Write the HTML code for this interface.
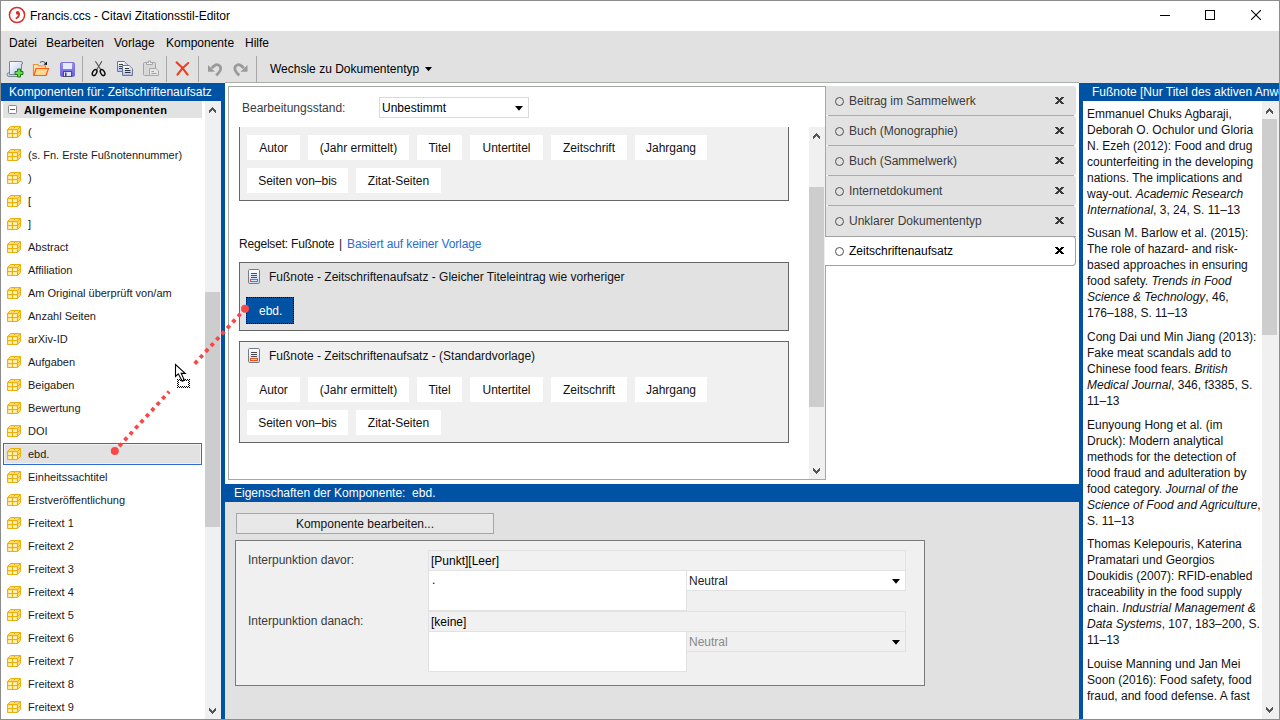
<!DOCTYPE html>
<html><head><meta charset="utf-8">
<style>
*{box-sizing:border-box;margin:0;padding:0}
html,body{width:1280px;height:720px;overflow:hidden;background:#fff}
body{position:relative;font-family:"Liberation Sans",sans-serif;font-size:12px;color:#000}
.a{position:absolute}
.t{position:absolute;white-space:nowrap;line-height:16px}
.s11{font-size:11px}
.b{font-weight:bold}
.bl{background:#0053a4}
.gr{background:#e1e1e1}
.sep{position:absolute;top:56px;width:1px;height:26px;background:#a8a8a8}
.chip{position:absolute;height:25px;background:#fff;line-height:16px;padding-top:5px;text-align:center;color:#111}
.box{position:absolute;border:1px solid #666}
.tab{position:absolute;left:826px;width:250px;height:29px;background:#e2e2e2;border-radius:0 2.5px 2.5px 0}
.tab .r{position:absolute;left:9px;top:11px;width:9px;height:9px;border:1px solid #505050;border-radius:50%}
.tab .t{left:23px;top:7px;color:#3a3a3a}
.tab svg{position:absolute;left:229px;top:11px}
.tsep{position:absolute;left:828px;width:246px;height:1px;background:#b2ab98}
</style></head><body>
<svg width="0" height="0" style="position:absolute">
<defs>
<g id="cube">
  <path d="M0.5 3.5 L3.5 0.5 H13.5 V8.5 L10.5 11.5 H0.5 Z" fill="#fcd972" stroke="#ebb10a" stroke-width="1"/>
  <path d="M0.5 3.5 H10.5 V11.5 M10.5 3.5 L13.5 0.5" fill="none" stroke="#ebb10a" stroke-width="1"/>
  <path d="M5.5 3.5 V11.5 M0.5 7.5 H10.5" stroke="#ebb10a" stroke-width="1"/>
  <path d="M7 2 L8.5 0.5 M10.5 7.5 L13.5 4.5" stroke="#ebb10a" stroke-width="1"/>
  <rect x="1.5" y="4.5" width="3" height="2.5" fill="#fff3c8"/>
  <rect x="6.3" y="4.5" width="3.5" height="2.5" fill="#fff3c8"/>
  <rect x="1.5" y="8.3" width="3" height="2.5" fill="#fff3c8"/>
  <rect x="6.3" y="8.3" width="3.5" height="2.5" fill="#fff3c8"/>
</g>
<g id="doc">
  <defs><linearGradient id="dg" x1="0" y1="0" x2="0" y2="1"><stop offset="0" stop-color="#ffffff"/><stop offset="1" stop-color="#c8d8f4"/></linearGradient></defs>
  <rect x="0.5" y="0.5" width="11" height="14" rx="1.2" fill="url(#dg)" stroke="#737c88"/>
  <path d="M3 4.5H9M3 6.5H9M3 8.5H9" stroke="#4a4a4a" stroke-width="1"/>
  <rect x="2.5" y="10.5" width="7" height="2" fill="#d4e8fb" stroke="#f0521e" stroke-width="1"/>
</g>
<g id="xx"><path d="M0 0h3v1h-3zM6 0h3v1h-3zM1 1h3v1h-3zM5 1h3v1h-3zM2 2h5v1h-5zM3 3h3v1h-3zM2 4h5v1h-5zM1 5h3v1h-3zM5 5h3v1h-3zM0 6h3v1h-3zM6 6h3v1h-3z"/></g>
<path id="cu" d="M3 0h1v1h-1zM2 1h3v1h-3zM1 2h5v1h-5zM0 3h3v1h-3zM4 3h3v1h-3zM0 4h2v1h-2zM5 4h2v1h-2zM0 5h1v1h-1zM6 5h1v1h-1z"/>
<path id="cd" d="M3 5h1v1h-1zM2 4h3v1h-3zM1 3h5v1h-5zM0 2h3v1h-3zM4 2h3v1h-3zM0 1h2v1h-2zM5 1h2v1h-2zM0 0h1v1h-1zM6 0h1v1h-1z"/>
<path id="t8" d="M0 0H8L4 4.8Z"/>
<path id="t7" d="M0 0H7L3.5 4.2Z"/>
</defs></svg>

<div class="a" style="left:0;top:0;width:1280px;height:31px;background:#fff"></div>
<svg class="a" style="left:8px;top:6px" width="18" height="18" viewBox="0 0 18 18">
  <circle cx="9" cy="9" r="7.6" fill="none" stroke="#d8302a" stroke-width="1.5"/>
  <circle cx="9.7" cy="6.8" r="1.9" fill="#d8302a"/>
  <path d="M11.2 7 C11.3 9.6 9.9 11.6 7.7 12.6" fill="none" stroke="#d8302a" stroke-width="1.8"/>
</svg>
<div class="t" style="left:30px;top:8px">Francis.ccs - Citavi Zitationsstil-Editor</div>
<div class="a" style="left:1160px;top:15px;width:10px;height:1px;background:#000"></div>
<div class="a" style="left:1205px;top:10px;width:10px;height:10px;border:1px solid #000"></div>
<svg class="a" style="left:1251px;top:10px" width="10" height="10" viewBox="0 0 10 10"><path d="M0 0L10 10M10 0L0 10" stroke="#000" stroke-width="1.1"/></svg>

<div class="a gr" style="left:0;top:31px;width:1280px;height:52px"></div>
<div class="t" style="left:9px;top:35px">Datei</div>
<div class="t" style="left:46px;top:35px">Bearbeiten</div>
<div class="t" style="left:114px;top:35px">Vorlage</div>
<div class="t" style="left:166px;top:35px">Komponente</div>
<div class="t" style="left:245px;top:35px">Hilfe</div>
<div class="sep" style="left:82px"></div>
<div class="sep" style="left:166px"></div>
<div class="sep" style="left:198px"></div>
<div class="sep" style="left:256px"></div>
<svg class="a" style="left:6px;top:60px" width="18" height="18" viewBox="0 0 18 18">
  <defs><linearGradient id="pg" x1="0" y1="0" x2="1" y2="1"><stop offset="0" stop-color="#ffffff"/><stop offset="1" stop-color="#b8c8ee"/></linearGradient></defs>
  <path d="M3.5 1.5 H15 Q16.5 1.5 16.5 3 V4 H15.5 V14.5 H3.5 Z" fill="url(#pg)" stroke="#7d8696" stroke-width="1"/>
  <path d="M1 14.5 Q1 12.5 3.5 12.5 V14.5 H13 Q14 16.5 12 16.5 H3 Q1 16.5 1 14.5Z" fill="#c9d6f2" stroke="#7d8696" stroke-width="1"/>
  <circle cx="13" cy="13" r="4.3" fill="#fff" opacity="0"/>
  <path d="M11.5 9 H14.5 V11.5 H17 V14.5 H14.5 V17 H11.5 V14.5 H9 V11.5 H11.5 Z" fill="#6ad84a" stroke="#148014" stroke-width="1"/>
</svg>
<svg class="a" style="left:32px;top:60px" width="18" height="17" viewBox="0 0 18 17">
  <defs><linearGradient id="fg" x1="0" y1="0" x2="0" y2="1"><stop offset="0" stop-color="#fff4d0"/><stop offset="1" stop-color="#ffc070"/></linearGradient></defs>
  <path d="M1.5 4.5 H5.5 L7 6 H13.5 V15.5 H1.5 Z" fill="url(#fg)" stroke="#f88a30" stroke-width="1.2"/>
  <path d="M2 15.5 L4 8.5 H16.5 L14 15.5 Z" fill="#ffd890" stroke="#ff5a18" stroke-width="1.2"/>
  <path d="M8 2.5 Q10.5 0.5 13 2.6" fill="none" stroke="#5a6a80" stroke-width="1.1"/>
  <path d="M11.5 4.5 L15 1.6 L15 5 Z" fill="#111"/>
</svg>
<svg class="a" style="left:60px;top:62px" width="15" height="15" viewBox="0 0 15 15">
  <defs><linearGradient id="sg" x1="0" y1="0" x2="0" y2="1"><stop offset="0" stop-color="#9c98f4"/><stop offset="1" stop-color="#6c58d0"/></linearGradient></defs>
  <rect x="0.5" y="0.5" width="14" height="14" rx="1.5" fill="url(#sg)" stroke="#7c70e0"/>
  <rect x="3" y="1" width="9" height="6" fill="#e4ecfc"/>
  <rect x="3.5" y="9.5" width="8" height="5" fill="#d8e4f8" stroke="#505060"/>
  <rect x="5" y="10.5" width="1.5" height="3.5" fill="#503880"/>
</svg>
<svg class="a" style="left:91px;top:60px" width="16" height="17" viewBox="0 0 16 17">
  <path d="M4.4 1.2 L10.2 10.2 M10.9 1.2 L5.3 10.2" stroke="#505050" stroke-width="1.1" fill="none"/>
  <ellipse cx="3.6" cy="12.6" rx="1.9" ry="3.2" transform="rotate(28 3.6 12.6)" fill="none" stroke="#111" stroke-width="1.5"/>
  <ellipse cx="11.6" cy="12.6" rx="1.9" ry="3.2" transform="rotate(-28 11.6 12.6)" fill="none" stroke="#111" stroke-width="1.5"/>
</svg>
<svg class="a" style="left:116px;top:60px" width="18" height="17" viewBox="0 0 18 17">
  <defs><linearGradient id="cg" x1="0" y1="0" x2="0" y2="1"><stop offset="0" stop-color="#ffffff"/><stop offset="1" stop-color="#aebcf4"/></linearGradient></defs>
  <path d="M1.5 1.5 H8.5 L11.5 4.5 V11.5 H1.5 Z" fill="url(#cg)" stroke="#687890" stroke-width="1"/>
  <path d="M8.5 1.5 L11.5 4.5 H8.5Z" fill="#b8d0f0"/>
  <path d="M3 4.5H7M3 6.5H8M3 8.5H8" stroke="#444" stroke-width="1"/>
  <path d="M6.5 5.5 H13.5 L16.5 8.5 V15.5 H6.5 Z" fill="url(#cg)" stroke="#687890" stroke-width="1"/>
  <path d="M13.5 5.5 L16.5 8.5 H13.5Z" fill="#b8d0f0"/>
  <path d="M9 8.5H13M9 10.5H14.5M9 12.5H14.5" stroke="#333" stroke-width="1"/>
</svg>
<svg class="a" style="left:142px;top:60px" width="18" height="17" viewBox="0 0 18 17">
  <rect x="1.5" y="2.5" width="12" height="13" rx="1" fill="#d8d8d8" stroke="#a4a4a4"/>
  <path d="M4.5 4.5 H10.5 V2.5 H8.5 V1 H6.5 V2.5 H4.5Z" fill="#ececec" stroke="#a4a4a4"/>
  <path d="M7.5 8.5 H14 L16.5 11 V15.5 H7.5 Z" fill="#e6e6e6" stroke="#a8a8a8"/>
  <path d="M9.5 11.5H12M9.5 13.5H14.5" stroke="#a0a0a0"/>
</svg>
<svg class="a" style="left:175px;top:61px" width="15" height="15" viewBox="0 0 15 15">
  <path d="M1.6 1.4 Q7.5 6 12.6 13.6" stroke="#f03c1c" stroke-width="2" stroke-linecap="round" fill="none"/>
  <path d="M13.2 2 Q7 7 2.4 13.6" stroke="#f03c1c" stroke-width="2" stroke-linecap="round" fill="none"/>
</svg>
<svg class="a" style="left:207px;top:62px" width="16" height="15" viewBox="0 0 16 15">
  <path d="M4.8 6.2 Q9 0.6 12.8 4 Q15.6 7.5 9.2 13.4" fill="none" stroke="#9a9a9a" stroke-width="2.8"/>
  <path d="M1 3 L8 9.8 L1 9.8 Z" fill="#9a9a9a"/>
</svg>
<svg class="a" style="left:233px;top:62px" width="16" height="15" viewBox="0 0 16 15">
  <g transform="translate(15.5 0) scale(-1 1)">
  <path d="M4.8 6.2 Q9 0.6 12.8 4 Q15.6 7.5 9.2 13.4" fill="none" stroke="#9a9a9a" stroke-width="2.8"/>
  <path d="M1 3 L8 9.8 L1 9.8 Z" fill="#9a9a9a"/>
  </g>
</svg>
<div class="t" style="left:270px;top:61px">Wechsle zu Dokumententyp</div>
<svg class="a" style="left:425px;top:67px" width="7" height="5"><use href="#t7"/></svg>
<div class="a bl" style="left:1px;top:83px;width:224px;height:18px"></div>
<div class="t" style="left:9px;top:84px;color:#fff">Komponenten für: Zeitschriftenaufsatz</div>
<div class="a bl" style="left:221px;top:83px;width:4px;height:637px"></div>
<div class="a" style="left:1px;top:101px;width:220px;height:618px;background:#fff"></div>
<div class="a" style="left:3px;top:101px;width:199px;height:17px;background:#e2e2e2"></div>
<div class="a" style="left:8px;top:105px;width:9px;height:9px;border:1px solid #8a8a8a;background:#fff;border-radius:1.5px"></div>
<div class="a" style="left:10px;top:109px;width:5px;height:1px;background:#3b5aa0"></div>
<div class="t s11 b" style="left:24px;top:102px;letter-spacing:0.35px">Allgemeine Komponenten</div>
<div class="a" style="left:205px;top:101px;width:16px;height:618px;background:#f0f0f0"></div>
<div class="a" style="left:205px;top:292px;width:15px;height:235px;background:#cdcdcd"></div>
<svg class="a" style="left:209px;top:107px;fill:#555" width="7" height="6"><use href="#cu"/></svg>
<svg class="a" style="left:209px;top:708px;fill:#555" width="7" height="6"><use href="#cd"/></svg>

<svg class="a" style="left:7px;top:126px" width="14" height="12"><use href="#cube"/></svg>
<div class="t s11" style="left:28px;top:124px;color:#1a1a1a">(</div>
<svg class="a" style="left:7px;top:149px" width="14" height="12"><use href="#cube"/></svg>
<div class="t s11" style="left:28px;top:147px;color:#1a1a1a">(s. Fn. Erste Fußnotennummer)</div>
<svg class="a" style="left:7px;top:172px" width="14" height="12"><use href="#cube"/></svg>
<div class="t s11" style="left:28px;top:170px;color:#1a1a1a">)</div>
<svg class="a" style="left:7px;top:195px" width="14" height="12"><use href="#cube"/></svg>
<div class="t s11" style="left:28px;top:193px;color:#1a1a1a">[</div>
<svg class="a" style="left:7px;top:218px" width="14" height="12"><use href="#cube"/></svg>
<div class="t s11" style="left:28px;top:216px;color:#1a1a1a">]</div>
<svg class="a" style="left:7px;top:241px" width="14" height="12"><use href="#cube"/></svg>
<div class="t s11" style="left:28px;top:239px;color:#1a1a1a">Abstract</div>
<svg class="a" style="left:7px;top:264px" width="14" height="12"><use href="#cube"/></svg>
<div class="t s11" style="left:28px;top:262px;color:#1a1a1a">Affiliation</div>
<svg class="a" style="left:7px;top:287px" width="14" height="12"><use href="#cube"/></svg>
<div class="t s11" style="left:28px;top:285px;color:#1a1a1a">Am Original überprüft von/am</div>
<svg class="a" style="left:7px;top:310px" width="14" height="12"><use href="#cube"/></svg>
<div class="t s11" style="left:28px;top:308px;color:#1a1a1a">Anzahl Seiten</div>
<svg class="a" style="left:7px;top:333px" width="14" height="12"><use href="#cube"/></svg>
<div class="t s11" style="left:28px;top:331px;color:#1a1a1a">arXiv-ID</div>
<svg class="a" style="left:7px;top:356px" width="14" height="12"><use href="#cube"/></svg>
<div class="t s11" style="left:28px;top:354px;color:#1a1a1a">Aufgaben</div>
<svg class="a" style="left:7px;top:379px" width="14" height="12"><use href="#cube"/></svg>
<div class="t s11" style="left:28px;top:377px;color:#1a1a1a">Beigaben</div>
<svg class="a" style="left:7px;top:402px" width="14" height="12"><use href="#cube"/></svg>
<div class="t s11" style="left:28px;top:400px;color:#1a1a1a">Bewertung</div>
<svg class="a" style="left:7px;top:425px" width="14" height="12"><use href="#cube"/></svg>
<div class="t s11" style="left:28px;top:423px;color:#1a1a1a">DOI</div>
<div class="a" style="left:3px;top:443px;width:199px;height:22px;border:1px solid #2f6bd0;background:#e2e2e2;box-shadow:inset 0 0 0 1px #f2f2f2"></div>
<svg class="a" style="left:7px;top:448px" width="14" height="12"><use href="#cube"/></svg>
<div class="t s11" style="left:28px;top:446px;color:#1a1a1a">ebd.</div>
<svg class="a" style="left:7px;top:471px" width="14" height="12"><use href="#cube"/></svg>
<div class="t s11" style="left:28px;top:469px;color:#1a1a1a">Einheitssachtitel</div>
<svg class="a" style="left:7px;top:494px" width="14" height="12"><use href="#cube"/></svg>
<div class="t s11" style="left:28px;top:492px;color:#1a1a1a">Erstveröffentlichung</div>
<svg class="a" style="left:7px;top:517px" width="14" height="12"><use href="#cube"/></svg>
<div class="t s11" style="left:28px;top:515px;color:#1a1a1a">Freitext 1</div>
<svg class="a" style="left:7px;top:540px" width="14" height="12"><use href="#cube"/></svg>
<div class="t s11" style="left:28px;top:538px;color:#1a1a1a">Freitext 2</div>
<svg class="a" style="left:7px;top:563px" width="14" height="12"><use href="#cube"/></svg>
<div class="t s11" style="left:28px;top:561px;color:#1a1a1a">Freitext 3</div>
<svg class="a" style="left:7px;top:586px" width="14" height="12"><use href="#cube"/></svg>
<div class="t s11" style="left:28px;top:584px;color:#1a1a1a">Freitext 4</div>
<svg class="a" style="left:7px;top:609px" width="14" height="12"><use href="#cube"/></svg>
<div class="t s11" style="left:28px;top:607px;color:#1a1a1a">Freitext 5</div>
<svg class="a" style="left:7px;top:632px" width="14" height="12"><use href="#cube"/></svg>
<div class="t s11" style="left:28px;top:630px;color:#1a1a1a">Freitext 6</div>
<svg class="a" style="left:7px;top:655px" width="14" height="12"><use href="#cube"/></svg>
<div class="t s11" style="left:28px;top:653px;color:#1a1a1a">Freitext 7</div>
<svg class="a" style="left:7px;top:678px" width="14" height="12"><use href="#cube"/></svg>
<div class="t s11" style="left:28px;top:676px;color:#1a1a1a">Freitext 8</div>
<svg class="a" style="left:7px;top:701px" width="14" height="12"><use href="#cube"/></svg>
<div class="t s11" style="left:28px;top:699px;color:#1a1a1a">Freitext 9</div>
<div class="a" style="left:225px;top:83px;width:854px;height:401px;background:#fff"></div>
<div class="a" style="left:225px;top:82px;width:854px;height:1px;background:#a9afa9"></div>
<div class="a" style="left:228px;top:86px;width:598px;height:394px;border:1px solid #a3aaa3"></div>
<div class="t" style="left:242px;top:100px;color:#3a3a3a">Bearbeitungsstand:</div>
<div class="a" style="left:379px;top:97px;width:150px;height:21px;border:1px solid #dadada;background:#fff"></div>
<div class="t" style="left:382px;top:100px">Unbestimmt</div>
<svg class="a" style="left:515px;top:106px" width="8" height="5"><use href="#t8"/></svg>
<div class="a" style="left:229px;top:127px;width:580px;height:352px;overflow:hidden">

<div class="a" style="left:10px;top:-27px;width:550px;height:101px;border:1px solid #666;background:#f0f0f0"></div>
<div class="chip" style="left:18px;top:8px;width:53px">Autor</div>
<div class="chip" style="left:79px;top:8px;width:101px">(Jahr ermittelt)</div>
<div class="chip" style="left:188px;top:8px;width:45px">Titel</div>
<div class="chip" style="left:241px;top:8px;width:73px">Untertitel</div>
<div class="chip" style="left:322px;top:8px;width:76px">Zeitschrift</div>
<div class="chip" style="left:406px;top:8px;width:72px">Jahrgang</div>
<div class="chip" style="left:18px;top:41px;width:101px">Seiten von–bis</div>
<div class="chip" style="left:127px;top:41px;width:85px">Zitat-Seiten</div>
<div class="t" style="left:10px;top:109px;color:#111;letter-spacing:-0.2px">Regelset: Fußnote</div>
<div class="t" style="left:110px;top:109px;color:#111">|</div>
<div class="t" style="left:118px;top:109px;color:#2a6ccc;letter-spacing:-0.12px">Basiert auf keiner Vorlage</div>
<div class="a" style="left:10px;top:135px;width:550px;height:69px;border:1px solid #666;background:#e2e2e2"></div>
<svg class="a" style="left:19px;top:142px" width="12" height="15"><use href="#doc"/></svg>
<div class="t" style="left:40px;top:142px;color:#111">Fußnote - Zeitschriftenaufsatz - Gleicher Titeleintrag wie vorheriger</div>
<div class="a" style="left:17px;top:170px;width:48px;height:27px;background:#0053a4;border:1px dotted #000"></div>
<div class="t" style="left:30px;top:176px;color:#fff">ebd.</div>
<div class="a" style="left:10px;top:214px;width:550px;height:102px;border:1px solid #666;background:#f0f0f0"></div>
<svg class="a" style="left:19px;top:221px" width="12" height="15"><use href="#doc"/></svg>
<div class="t" style="left:40px;top:221px;color:#111">Fußnote - Zeitschriftenaufsatz - (Standardvorlage)</div>
<div class="chip" style="left:18px;top:250px;width:53px">Autor</div>
<div class="chip" style="left:79px;top:250px;width:101px">(Jahr ermittelt)</div>
<div class="chip" style="left:188px;top:250px;width:45px">Titel</div>
<div class="chip" style="left:241px;top:250px;width:73px">Untertitel</div>
<div class="chip" style="left:322px;top:250px;width:76px">Zeitschrift</div>
<div class="chip" style="left:406px;top:250px;width:72px">Jahrgang</div>
<div class="chip" style="left:18px;top:283px;width:101px">Seiten von–bis</div>
<div class="chip" style="left:127px;top:283px;width:85px">Zitat-Seiten</div>
</div>
<div class="a" style="left:809px;top:127px;width:16px;height:352px;background:#f0f0f0"></div>
<div class="a" style="left:809px;top:187px;width:15px;height:220px;background:#cdcdcd"></div>
<svg class="a" style="left:813px;top:133px;fill:#555" width="7" height="6"><use href="#cu"/></svg>
<svg class="a" style="left:813px;top:468px;fill:#555" width="7" height="6"><use href="#cd"/></svg>

<div class="tab" style="top:86px;height:29px"><div class="r"></div><div class="t">Beitrag im Sammelwerk</div><svg width="9" height="7" style="fill:#3c3c3c"><use href="#xx"/></svg></div>
<div class="tsep" style="top:115px"></div>
<div class="tab" style="top:116px;height:29px"><div class="r"></div><div class="t">Buch (Monographie)</div><svg width="9" height="7" style="fill:#3c3c3c"><use href="#xx"/></svg></div>
<div class="tsep" style="top:145px"></div>
<div class="tab" style="top:146px;height:29px"><div class="r"></div><div class="t">Buch (Sammelwerk)</div><svg width="9" height="7" style="fill:#3c3c3c"><use href="#xx"/></svg></div>
<div class="tsep" style="top:175px"></div>
<div class="tab" style="top:176px;height:29px"><div class="r"></div><div class="t">Internetdokument</div><svg width="9" height="7" style="fill:#3c3c3c"><use href="#xx"/></svg></div>
<div class="tsep" style="top:205px"></div>
<div class="tab" style="top:206px;height:30px"><div class="r"></div><div class="t">Unklarer Dokumententyp</div><svg width="9" height="7" style="fill:#3c3c3c"><use href="#xx"/></svg></div>
<div class="a" style="left:826px;top:236px;width:250px;height:1px;background:#a0a0a0"></div>
<div class="a" style="left:825px;top:236px;width:251px;height:30px;background:#fff;border:1px solid #a0a0a0;border-left:none;border-radius:0 4px 4px 0"></div>
<div class="a" style="left:835px;top:247px;width:9px;height:9px;border:1px solid #505050;border-radius:50%"></div>
<div class="t" style="left:849px;top:243px;color:#000">Zeitschriftenaufsatz</div>
<svg class="a" style="left:1055px;top:247px;fill:#000" width="9" height="7"><use href="#xx"/></svg>
<div class="a bl" style="left:225px;top:484px;width:854px;height:18px"></div>
<div class="t" style="left:234px;top:485px;color:#fff">Eigenschaften der Komponente:&nbsp; ebd.</div>
<div class="a gr" style="left:225px;top:502px;width:854px;height:218px"></div>
<div class="a" style="left:236px;top:513px;width:258px;height:21px;border:1px solid #a6a6a6;background:#e8e8e8"></div>
<div class="t" style="left:236px;top:516px;width:258px;text-align:center;color:#111">Komponente bearbeiten...</div>
<div class="a" style="left:235px;top:540px;width:690px;height:146px;border:1px solid #7a7a7a;background:#f0f0f0"></div>
<div class="t" style="left:248px;top:552px;color:#3a3a3a">Interpunktion davor:</div>
<div class="t" style="left:248px;top:613px;color:#3a3a3a">Interpunktion danach:</div>
<div class="a" style="left:428px;top:550px;width:478px;height:21px;border:1px solid #e2e2e2;background:#f1f1f1"></div>
<div class="t" style="left:431px;top:553px">[Punkt][Leer]</div>
<div class="a" style="left:428px;top:570px;width:259px;height:41px;border:1px solid #e2e2e2;background:#fff"></div>
<div class="t" style="left:432px;top:572px">.</div>
<div class="a" style="left:686px;top:570px;width:220px;height:21px;border:1px solid #e2e2e2;background:#fff"></div>
<div class="t" style="left:689px;top:573px;color:#222">Neutral</div>
<svg class="a" style="left:892px;top:579px" width="8" height="5"><use href="#t8"/></svg>
<div class="a" style="left:428px;top:611px;width:478px;height:21px;border:1px solid #e2e2e2;background:#f1f1f1"></div>
<div class="t" style="left:431px;top:614px">[keine]</div>
<div class="a" style="left:428px;top:631px;width:259px;height:41px;border:1px solid #e2e2e2;background:#fff"></div>
<div class="a" style="left:686px;top:631px;width:220px;height:21px;border:1px solid #e2e2e2;background:#f0f0f0"></div>
<div class="t" style="left:689px;top:634px;color:#888">Neutral</div>
<svg class="a" style="left:892px;top:640px" width="8" height="5"><use href="#t8"/></svg>

<div class="a bl" style="left:1079px;top:83px;width:201px;height:637px"></div>
<div class="t" style="left:1092px;top:84px;color:#fff">Fußnote [Nur Titel des aktiven Anwendungsfalls]</div>
<div class="a" style="left:1083px;top:101px;width:197px;height:619px;background:#fff"></div>
<div class="a" style="left:1262px;top:101px;width:17px;height:618px;background:#f0f0f0"></div>
<div class="a" style="left:1262px;top:119px;width:15px;height:216px;background:#cdcdcd"></div>
<svg class="a" style="left:1266px;top:108px;fill:#555" width="7" height="6"><use href="#cu"/></svg>
<svg class="a" style="left:1266px;top:707px;fill:#555" width="7" height="6"><use href="#cd"/></svg>

<div class="a" style="left:1083px;top:101px;width:179px;height:618px;overflow:hidden">
<div class="t" style="left:4px;top:5px;color:#111">Emmanuel Chuks Agbaraji,</div>
<div class="t" style="left:4px;top:21px;color:#111">Deborah O. Ochulor und Gloria</div>
<div class="t" style="left:4px;top:37px;color:#111">N. Ezeh (2012): Food and drug</div>
<div class="t" style="left:4px;top:53px;color:#111">counterfeiting in the developing</div>
<div class="t" style="left:4px;top:69px;color:#111">nations. The implications and</div>
<div class="t" style="left:4px;top:85px;color:#111">way-out. <i>Academic Research</i></div>
<div class="t" style="left:4px;top:101px;color:#111"><i>International</i>, 3, 24, S. 11–13</div>
<div class="t" style="left:4px;top:124px;color:#111">Susan M. Barlow et al. (2015):</div>
<div class="t" style="left:4px;top:140px;color:#111">The role of hazard- and risk-</div>
<div class="t" style="left:4px;top:156px;color:#111">based approaches in ensuring</div>
<div class="t" style="left:4px;top:172px;color:#111">food safety. <i>Trends in Food</i></div>
<div class="t" style="left:4px;top:188px;color:#111"><i>Science &amp; Technology</i>, 46,</div>
<div class="t" style="left:4px;top:204px;color:#111">176–188, S. 11–13</div>
<div class="t" style="left:4px;top:228px;color:#111">Cong Dai und Min Jiang (2013):</div>
<div class="t" style="left:4px;top:244px;color:#111">Fake meat scandals add to</div>
<div class="t" style="left:4px;top:260px;color:#111">Chinese food fears. <i>British</i></div>
<div class="t" style="left:4px;top:276px;color:#111"><i>Medical Journal</i>, 346, f3385, S.</div>
<div class="t" style="left:4px;top:292px;color:#111">11–13</div>
<div class="t" style="left:4px;top:316px;color:#111">Eunyoung Hong et al. (im</div>
<div class="t" style="left:4px;top:332px;color:#111">Druck): Modern analytical</div>
<div class="t" style="left:4px;top:348px;color:#111">methods for the detection of</div>
<div class="t" style="left:4px;top:364px;color:#111">food fraud and adulteration by</div>
<div class="t" style="left:4px;top:380px;color:#111">food category. <i>Journal of the</i></div>
<div class="t" style="left:4px;top:396px;color:#111"><i>Science of Food and Agriculture</i>,</div>
<div class="t" style="left:4px;top:412px;color:#111">S. 11–13</div>
<div class="t" style="left:4px;top:435px;color:#111">Thomas Kelepouris, Katerina</div>
<div class="t" style="left:4px;top:451px;color:#111">Pramatari und Georgios</div>
<div class="t" style="left:4px;top:467px;color:#111">Doukidis (2007): RFID-enabled</div>
<div class="t" style="left:4px;top:483px;color:#111">traceability in the food supply</div>
<div class="t" style="left:4px;top:499px;color:#111">chain. <i>Industrial Management &amp;</i></div>
<div class="t" style="left:4px;top:515px;color:#111"><i>Data Systems</i>, 107, 183–200, S.</div>
<div class="t" style="left:4px;top:531px;color:#111">11–13</div>
<div class="t" style="left:4px;top:555px;color:#111">Louise Manning und Jan Mei</div>
<div class="t" style="left:4px;top:571px;color:#111">Soon (2016): Food safety, food</div>
<div class="t" style="left:4px;top:587px;color:#111">fraud, and food defense. A fast</div>
</div>
<svg class="a" style="left:0;top:0;pointer-events:none" width="1280" height="720">
  <defs>
    <pattern id="chk" x="0" y="0" width="2" height="2" patternUnits="userSpaceOnUse">
      <rect x="0" y="0" width="1" height="1" fill="#000"/><rect x="1" y="1" width="1" height="1" fill="#000"/>
    </pattern>
  </defs>
  <path d="M114.8 451 L169.16 391.62" stroke="#fa4646" stroke-width="3.8" stroke-dasharray="3.8 4.2" stroke-dashoffset="1.6" fill="none"/>
  <path d="M194.49 363.96 L245 308.8" stroke="#fa4646" stroke-width="3.8" stroke-dasharray="3.8 4.2" stroke-dashoffset="7.6" fill="none"/>
  <circle cx="114.8" cy="451" r="4" fill="#fa4646"/>
  <circle cx="245" cy="308.8" r="4" fill="#fa4646"/>
  <path d="M175.5 364.5 V376.5 L178.3 373.8 L182.2 381.3 L184.4 380.2 L181.2 373.4 L185.2 373.4 Z" fill="#fff" stroke="#000" stroke-width="1.1" stroke-linejoin="miter"/>
  <rect x="177" y="379" width="13" height="2" fill="url(#chk)"/>
  <rect x="177" y="386" width="13" height="2" fill="url(#chk)"/>
  <rect x="177" y="379" width="2" height="9" fill="url(#chk)"/>
  <rect x="188" y="379" width="2" height="9" fill="url(#chk)"/>
</svg>

<div class="a" style="left:0;top:0;width:1280px;height:720px;border:1px solid #8c8c8c;pointer-events:none"></div>
</body></html>
